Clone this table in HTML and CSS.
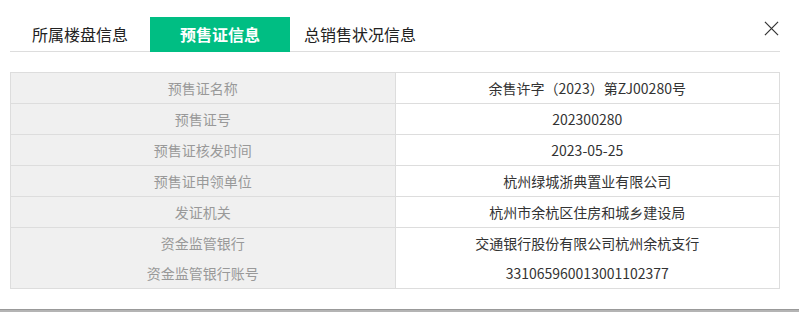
FILE: index.html
```html
<!DOCTYPE html>
<html lang="zh-CN">
<head>
    <meta charset="UTF-8">
    <meta name="viewport" content="width=device-width, initial-scale=1.0">
    <link rel="stylesheet" href="styles.css">
    <title>预售证信息</title>
</head>
<body>

<div class="dialog">
    <div class="tabs">
        <div class="tab">所属楼盘信息</div>
        <div class="tab active">预售证信息</div>
        <div class="tab">总销售状况信息</div>
    </div>
    <button class="close-btn" title="关闭">
        <svg viewBox="0 0 16 16"><path d="M1 1L15 15M15 1L1 15" stroke="#333" stroke-width="1.3" fill="none"/></svg>
    </button>

    <table class="info-table">
        <tr>
            <td class="label">预售证名称</td>
            <td class="value">余售许字（2023）第ZJ00280号</td>
        </tr>
        <tr>
            <td class="label">预售证号</td>
            <td class="value">202300280</td>
        </tr>
        <tr>
            <td class="label">预售证核发时间</td>
            <td class="value">2023-05-25</td>
        </tr>
        <tr>
            <td class="label">预售证申领单位</td>
            <td class="value">杭州绿城浙典置业有限公司</td>
        </tr>
        <tr>
            <td class="label">发证机关</td>
            <td class="value">杭州市余杭区住房和城乡建设局</td>
        </tr>
        <tr>
            <td class="label">资金监管银行<br>资金监管银行账号</td>
            <td class="value">交通银行股份有限公司杭州余杭支行<br>331065960013001102377</td>
        </tr>
    </table>
</div>

<div class="page-behind"></div>

</body>
</html>
```

FILE: styles.css
```css
body {
    margin: 0;
    font-family: "Microsoft YaHei", "Noto Sans CJK SC", sans-serif;
    background: #fff;
}
.dialog {
    position: relative;
    height: 309px;
    padding: 17px 19px 0 10px;
    box-sizing: border-box;
}
.tabs {
    display: flex;
    border-bottom: 1px solid #ddd;
    height: 34px;
}
.tab {
    width: 140px;
    height: 35px;
    line-height: 35px;
    text-align: center;
    font-size: 16px;
    color: #222;
    cursor: pointer;
}
.tab.active {
    background-color: #00be83;
    color: #fff;
    font-weight: bold;
}
.close-btn {
    position: absolute;
    top: 21px;
    right: 20px;
    width: 15px;
    height: 15px;
    padding: 0;
    border: none;
    background: none;
    cursor: pointer;
}
.close-btn svg {
    display: block;
    width: 15px;
    height: 15px;
}
.info-table {
    width: 770px;
    margin-top: 20px;
    border-collapse: collapse;
    font-size: 14px;
}
.info-table td {
    border: 1px solid #ddd;
    text-align: center;
    line-height: 30px;
    height: 30px;
    padding: 0;
    width: 50%;
}
.info-table .label {
    background-color: #f0f0f0;
    color: #999;
}
.info-table .value {
    color: #333;
}
.page-behind {
    height: 3px;
    background: #b4b4b4;
    border-top: 1px solid #999;
}
```
